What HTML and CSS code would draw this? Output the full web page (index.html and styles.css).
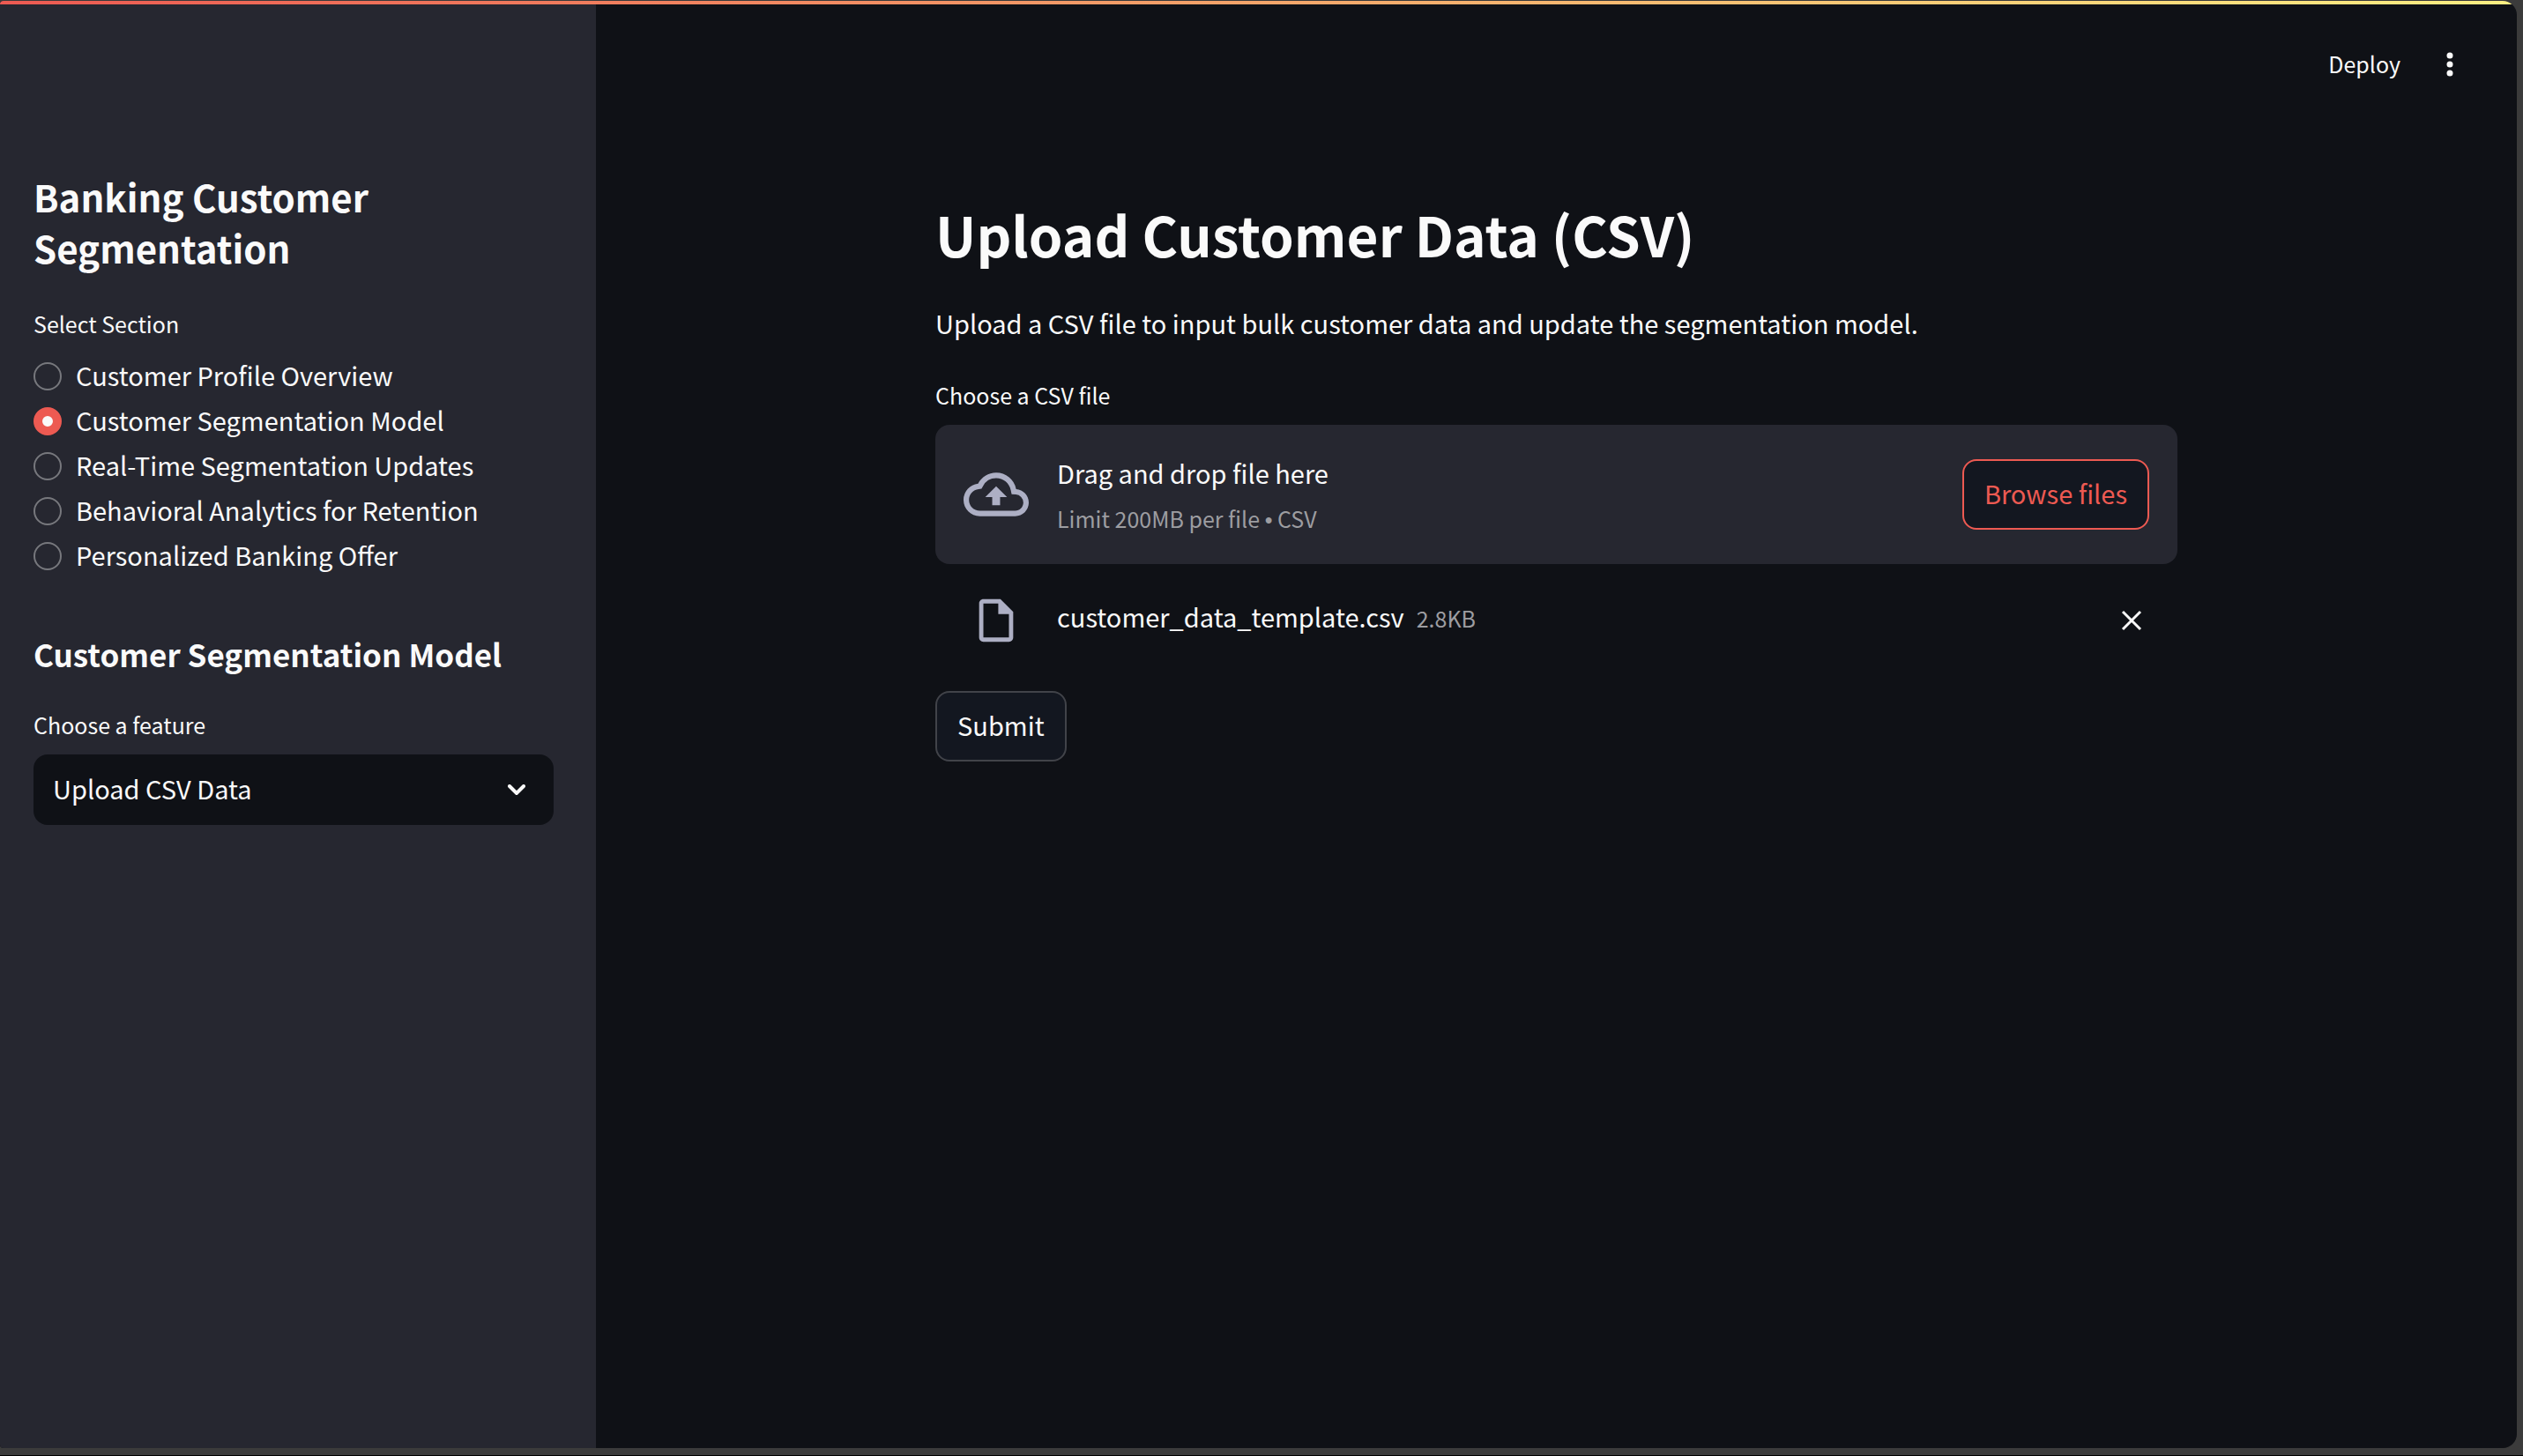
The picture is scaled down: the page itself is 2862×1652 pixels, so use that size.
FILE: index.html
```html
<!DOCTYPE html>
<html lang="en">
<head>
<meta charset="utf-8">
<meta name="viewport" content="width=device-width, initial-scale=1">
<title>Banking Customer Segmentation</title>
<link rel="stylesheet" href="styles.css">
</head>
<body>
<div class="app">
  <aside class="sidebar">
    <h1 class="sidebar-title">Banking Customer Segmentation</h1>
    <fieldset class="sections">
      <legend class="label">Select Section</legend>
      <label class="option"><input class="radio" type="radio" name="section"><span class="option-text">Customer Profile Overview</span></label>
      <label class="option"><input class="radio" type="radio" name="section" checked><span class="option-text">Customer Segmentation Model</span></label>
      <label class="option"><input class="radio" type="radio" name="section"><span class="option-text">Real-Time Segmentation Updates</span></label>
      <label class="option"><input class="radio" type="radio" name="section"><span class="option-text">Behavioral Analytics for Retention</span></label>
      <label class="option"><input class="radio" type="radio" name="section"><span class="option-text">Personalized Banking Offer</span></label>
    </fieldset>
    <h2 class="sidebar-subtitle">Customer Segmentation Model</h2>
    <label class="label" for="feature">Choose a feature</label>
    <div class="select-wrap">
      <select class="select" id="feature"><option>Upload CSV Data</option></select>
      <svg class="chevron" viewBox="0 0 20 12" aria-hidden="true"><path d="M2 2l8 8 8-8"/></svg>
    </div>
  </aside>
  <div class="page">
    <header class="toolbar">
      <button class="deploy" type="button">Deploy</button>
      <button class="icon-button" type="button" aria-label="Menu">
        <svg class="dots" viewBox="0 0 8 28" aria-hidden="true"><circle cx="4" cy="4" r="3.5"/><circle cx="4" cy="14" r="3.5"/><circle cx="4" cy="24" r="3.5"/></svg>
      </button>
    </header>
    <main class="content">
      <h1 class="title">Upload Customer Data (CSV)</h1>
      <p class="intro">Upload a CSV file to input bulk customer data and update the segmentation model.</p>
      <label class="label" for="browse">Choose a CSV file</label>
      <section class="dropzone">
        <svg class="cloud" viewBox="0 0 24 24" aria-hidden="true"><path d="M19.35 10.04A7.49 7.49 0 0012 4C9.11 4 6.6 5.64 5.35 8.04A5.994 5.994 0 000 14c0 3.31 2.69 6 6 6h13c2.76 0 5-2.24 5-5 0-2.64-2.05-4.78-4.65-4.96zM19 18H6c-2.21 0-4-1.79-4-4 0-2.05 1.53-3.76 3.56-3.97l1.07-.11.5-.95A5.469 5.469 0 0112 6c2.62 0 4.88 1.86 5.39 4.43l.3 1.5 1.53.11A2.98 2.98 0 0122 15c0 1.65-1.35 3-3 3zM8 13h2.55v3h2.9v-3H16l-4-4z"/></svg>
        <div class="drop-text">
          <span class="drop-main">Drag and drop file here</span>
          <span class="drop-limit">Limit 200MB per file <span class="bullet">•</span> CSV</span>
        </div>
        <button class="button button-browse" id="browse" type="button">Browse files</button>
      </section>
      <div class="file">
        <svg class="file-icon" viewBox="0 0 24 24" aria-hidden="true"><path d="M14 2H6c-1.1 0-1.99.9-1.99 2L4 20c0 1.1.89 2 1.99 2H18c1.1 0 2-.9 2-2V8l-6-6zM6 20V4h7v5h5v11H6z"/></svg>
        <div class="file-text"><span>customer_data_template.csv</span><span class="file-size">2.8KB</span></div>
        <button class="icon-button" type="button" aria-label="Remove file">
          <svg class="cross" viewBox="0 0 24 24" aria-hidden="true"><path d="M2 2l20 20M22 2L2 22"/></svg>
        </button>
      </div>
      <button class="button" type="button">Submit</button>
    </main>
  </div>
</div>
</body>
</html>
```
FILE: styles.css
```css
:root {
  --bg: #0f1116;
  --panel: #262730;
  --text: #fafafa;
  --muted: #9d9da1;
  --icon: #adafc4;
  --red: #ed5a52;
  --button: #131720;
}

* { box-sizing: border-box; }

body {
  margin: 0;
  min-height: 100vh;
  display: flex;
  padding: 1px 7px 8px 0;
  border-bottom: 1px solid #000;
  background: #3b3b3b;
  color: var(--text);
  font-family: "Noto Sans CJK SC", "Noto Sans", sans-serif;
  font-size: 29px;
  line-height: 48px;
}

h1, h2, p { margin: 0; }

button, select, input { font: inherit; color: inherit; }

button { cursor: pointer; }

.app {
  position: relative;
  flex: 1;
  display: flex;
  border-radius: 4px 16px 16px 4px;
  overflow: hidden;
  background: var(--bg);
}

/* Rainbow strip over the top edge */
.app::before {
  content: "";
  position: absolute;
  inset: 0 0 auto;
  height: 4px;
  background: linear-gradient(90deg, #ed5a52, #fdf083);
}

.sidebar {
  flex: none;
  width: 676px;
  padding: 193px 48px 48px 38px;
  background: var(--panel);
}

.sidebar-title {
  margin-bottom: 37px;
  font-size: 42px;
  line-height: 58px;
  font-weight: 700;
}

.label {
  display: block;
  margin-bottom: 14px;
  padding: 0;
  font-size: 25px;
  line-height: 40px;
}

.sections {
  margin: 0 0 62px;
  padding: 0;
  border: 0;
}

.option {
  display: flex;
  gap: 16px;
  height: 51px;
}

.option-text { line-height: 48px; }

.radio {
  appearance: none;
  flex: none;
  align-self: center;
  width: 32px;
  height: 32px;
  margin: 0;
  border: 2px solid #77787d;
  border-radius: 50%;
}

.radio:checked {
  border: 10px solid var(--red);
  background: var(--text);
}

.sidebar-subtitle {
  margin-bottom: 36px;
  font-size: 35px;
  line-height: 48px;
  font-weight: 700;
}

.select-wrap { position: relative; }

.select {
  appearance: none;
  display: block;
  width: 100%;
  height: 80px;
  padding: 0 64px 4px 22px;
  border: 0;
  border-radius: 16px;
  background: var(--bg);
}

.chevron {
  position: absolute;
  right: 32px;
  top: 34px;
  width: 20px;
  height: 12px;
  pointer-events: none;
  fill: none;
  stroke: var(--text);
  stroke-width: 4;
  stroke-linecap: round;
}

.page {
  flex: 1;
  min-width: 0;
}

.toolbar {
  display: flex;
  align-items: center;
  justify-content: flex-end;
  gap: 36px;
  height: 144px;
  padding-right: 56px;
}

.deploy {
  padding: 0 0 2px;
  border: 0;
  background: none;
  font-size: 25px;
  line-height: 40px;
}

.icon-button {
  display: flex;
  align-items: center;
  justify-content: center;
  width: 40px;
  height: 40px;
  padding: 0;
  border: 0;
  background: none;
}

.dots {
  width: 8px;
  height: 28px;
  fill: var(--text);
}

.content {
  max-width: 1409px;
  margin: 0 auto;
  padding: 81px 0 48px;
}

.title {
  margin-bottom: 38px;
  font-size: 62px;
  line-height: 78px;
  font-weight: 700;
}

.intro { margin-bottom: 38px; }

.dropzone {
  display: flex;
  align-items: center;
  gap: 32px;
  height: 158px;
  padding: 0 32px;
  border-radius: 16px;
  background: var(--panel);
}

.cloud {
  width: 74px;
  height: 74px;
  fill: var(--icon);
}

.drop-text {
  flex: 1;
  display: flex;
  flex-direction: column;
  gap: 8px;
}

.drop-limit {
  color: var(--muted);
  font-size: 25px;
  line-height: 40px;
}

.bullet { font-family: "Liberation Sans", sans-serif; }

.button {
  height: 80px;
  padding: 0 23px 4px;
  border: 2px solid #414349;
  border-radius: 16px;
  background: var(--button);
}

.button-browse {
  border-color: var(--red);
  color: var(--red);
}

.file {
  display: flex;
  align-items: center;
  margin: 35px 0 51px;
  padding: 0 32px 0 40px;
}

.file-icon {
  width: 58px;
  height: 58px;
  margin-right: 40px;
  fill: var(--icon);
}

.file-text {
  flex: 1;
  display: flex;
  align-self: flex-start;
  align-items: baseline;
  gap: 14px;
}

.file-size {
  color: var(--muted);
  font-size: 25px;
}

.cross {
  width: 24px;
  height: 24px;
  stroke: var(--text);
  stroke-width: 3;
}
```
